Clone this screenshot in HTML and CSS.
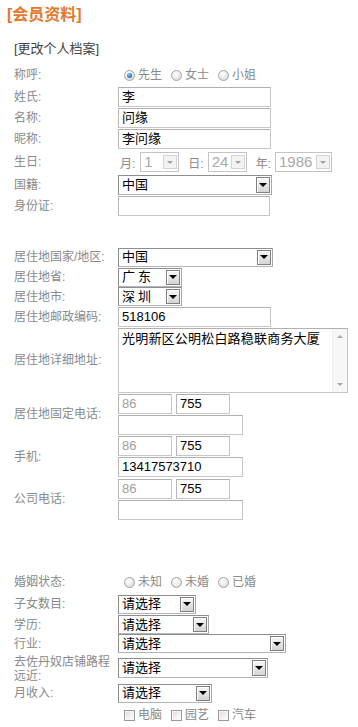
FILE: index.html
```html
<!DOCTYPE html>
<html lang="zh">
<head>
<meta charset="utf-8">
<title>会员资料</title>
<link rel="stylesheet" href="styles.css">
</head>
<body>
<div class="page">
  <h1 class="title">[会员资料]</h1>
  <div class="sub">[更改个人档案]</div>
  <div class="form">
    <div class="row h22"><span class="lbl">称呼:</span>
      <span class="ctl opts">
        <span class="opt"><i class="radio on"></i>先生</span>
        <span class="opt"><i class="radio"></i>女士</span>
        <span class="opt"><i class="radio"></i>小姐</span>
      </span>
    </div>
    <div class="row h21"><span class="lbl">姓氏:</span><span class="ctl"><span class="inp w153">李</span></span></div>
    <div class="row h21"><span class="lbl">名称:</span><span class="ctl"><span class="inp w153">问缘</span></span></div>
    <div class="row h21"><span class="lbl">昵称:</span><span class="ctl"><span class="inp w153">李问缘</span></span></div>
    <div class="row h26"><span class="lbl">生日:</span>
      <span class="ctl bday">
        <span class="dl">月:</span>
        <span class="sel dis w39"><span class="val">1</span><span class="btn"><i class="tri"></i></span></span>
        <span class="dl gap9">日:</span>
        <span class="sel dis w39"><span class="val">24</span><span class="btn"><i class="tri"></i></span></span>
        <span class="dl gap9">年:</span>
        <span class="sel dis w57"><span class="val">1986</span><span class="btn"><i class="tri"></i></span></span>
      </span>
    </div>
    <div class="row h20"><span class="lbl">国籍:</span><span class="ctl"><span class="sel w154 hs20"><span class="val">中国</span><span class="btn"><i class="tri"></i></span></span></span></div>
    <div class="row h21"><span class="lbl">身份证:</span><span class="ctl"><span class="inp w152"></span></span></div>

    <div class="spacer s31"></div>

    <div class="row h20"><span class="lbl">居住地国家/地区:</span><span class="ctl"><span class="sel w155"><span class="val">中国</span><span class="btn"><i class="tri"></i></span></span></span></div>
    <div class="row h20"><span class="lbl">居住地省:</span><span class="ctl"><span class="sel w64"><span class="val sp">广东</span><span class="btn"><i class="tri"></i></span></span></span></div>
    <div class="row h19"><span class="lbl">居住地市:</span><span class="ctl"><span class="sel w64"><span class="val sp">深圳</span><span class="btn"><i class="tri"></i></span></span></span></div>
    <div class="row h21"><span class="lbl">居住地邮政编码:</span><span class="ctl"><span class="inp w153">518106</span></span></div>
    <div class="row h66"><span class="lbl">居住地详细地址:</span>
      <span class="ctl"><span class="ta">
        <span class="ta-text">光明新区公明松白路稳联商务大厦</span>
        <span class="sb"><i class="up"></i><i class="dn"></i></span>
      </span></span>
    </div>
    <div class="row h42"><span class="lbl">居住地固定电话:</span>
      <span class="ctl phone">
        <span class="pline"><span class="inp w54 gray">86</span><span class="inp w54">755</span></span>
        <span class="inp w125"></span>
      </span>
    </div>
    <div class="row h43"><span class="lbl">手机:</span>
      <span class="ctl phone">
        <span class="pline"><span class="inp w54 gray">86</span><span class="inp w54">755</span></span>
        <span class="inp w125">13417573710</span>
      </span>
    </div>
    <div class="row h42"><span class="lbl">公司电话:</span>
      <span class="ctl phone">
        <span class="pline"><span class="inp w54 gray">86</span><span class="inp w54">755</span></span>
        <span class="inp w125"></span>
      </span>
    </div>

    <div class="spacer s51"></div>

    <div class="row h22"><span class="lbl">婚姻状态:</span>
      <span class="ctl opts">
        <span class="opt"><i class="radio"></i>未知</span>
        <span class="opt"><i class="radio"></i>未婚</span>
        <span class="opt"><i class="radio"></i>已婚</span>
      </span>
    </div>
    <div class="row h22"><span class="lbl">子女数目:</span><span class="ctl"><span class="sel w77"><span class="val">请选择</span><span class="btn"><i class="tri"></i></span></span></span></div>
    <div class="row h19"><span class="lbl">学历:</span><span class="ctl"><span class="sel w91"><span class="val">请选择</span><span class="btn"><i class="tri"></i></span></span></span></div>
    <div class="row h19"><span class="lbl">行业:</span><span class="ctl"><span class="sel w168"><span class="val">请选择</span><span class="btn"><i class="tri"></i></span></span></span></div>
    <div class="row h30"><span class="lbl two">去佐丹奴店铺路程远近:</span><span class="ctl"><span class="sel w150 hs20"><span class="val">请选择</span><span class="btn"><i class="tri"></i></span></span></span></div>
    <div class="row h20"><span class="lbl">月收入:</span><span class="ctl"><span class="sel w94"><span class="val">请选择</span><span class="btn"><i class="tri"></i></span></span></span></div>
    <div class="row h24"><span class="lbl"></span>
      <span class="ctl opts">
        <span class="opt"><i class="cbox"></i>电脑</span>
        <span class="opt"><i class="cbox"></i>园艺</span>
        <span class="opt"><i class="cbox"></i>汽车</span>
      </span>
    </div>
  </div>
</div>
</body>
</html>
```
FILE: styles.css
```css
html, body {
  margin: 0;
  padding: 0;
  background: #fff;
}
body {
  font-family: "Liberation Sans", "Noto Sans CJK SC", sans-serif;
  font-size: 12px;
  color: #888;
}
.page {
  width: 358px;
}
.title {
  margin: 0;
  height: 29px;
  line-height: 29px;
  padding-left: 7px;
  font-size: 16px;
  font-weight: bold;
  color: #e4782c;
  font-family: "Liberation Sans", "Noto Sans CJK SC", sans-serif;
}
.sub {
  margin-top: 11px;
  height: 18px;
  line-height: 18px;
  padding-left: 14px;
  font-size: 13px;
  color: #444;
}
.form {
  margin-top: 6px;
  padding-left: 14px;
}
.row {
  display: grid;
  grid-template-columns: 104px 1fr;
  align-items: center;
  overflow: visible;
}
.h19 { height: 19px; }
.h20 { height: 20px; }
.h21 { height: 21px; }
.h22 { height: 22px; }
.h24 { height: 24px; }
.h26 { height: 26px; }
.h30 { height: 30px; }
.h42 { height: 42px; }
.h43 { height: 43px; }
.h66 { height: 66px; }
.spacer.s31 { height: 31px; }
.spacer.s51 { height: 51px; }

.lbl {
  color: #8a8a8a;
  font-size: 12px;
  line-height: 16px;
  white-space: normal;
}
.lbl.two {
  align-self: start;
  padding-top: 2px;
  line-height: 14px;
}
.ctl {
  display: flex;
  align-items: center;
  min-width: 0;
}

/* radios and checkboxes */
.opts {
  padding-left: 6px;
}
.opt {
  display: inline-flex;
  align-items: center;
  margin-right: 9px;
  color: #8a8a8a;
  font-size: 12px;
  line-height: 14px;
}
.radio, .cbox {
  display: inline-block;
  width: 11px;
  height: 11px;
  box-sizing: border-box;
  margin-right: 3px;
  border: 1px solid #a4a4a4;
  background: radial-gradient(circle at 40% 35%, #ffffff 0%, #f0f0f0 40%, #cfcfcf 100%);
  position: relative;
}
.radio {
  border-radius: 50%;
}
.cbox {
  border-color: #9a9a9a;
  background: linear-gradient(135deg, #d8d8d8 0%, #f4f4f4 60%, #ffffff 100%);
  box-shadow: inset 0 0 0 1px #f6f6f6;
}
.radio.on::after {
  content: "";
  position: absolute;
  left: 2px;
  top: 2px;
  width: 5px;
  height: 5px;
  border-radius: 50%;
  background: radial-gradient(circle at 40% 35%, #8fd0f5 0%, #2b7fc0 55%, #10406e 100%);
}

/* text inputs */
.inp {
  display: block;
  box-sizing: border-box;
  height: 20px;
  border: 1px solid #c6c6c6;
  border-top-color: #b0b0b0;
  border-left-color: #b8b8b8;
  background: #fff;
  color: #000;
  font-size: 13px;
  line-height: 18px;
  padding-left: 3px;
  white-space: nowrap;
  overflow: hidden;
}
.inp.gray { color: #a0a0a0; }
.w54 { width: 54px; }
.w125 { width: 125px; }
.w152 { width: 152px; }
.w153 { width: 153px; }

.phone {
  flex-direction: column;
  align-items: flex-start;
  gap: 1px;
}
.pline {
  display: flex;
  gap: 4px;
}

/* selects */
.sel {
  display: flex;
  align-items: center;
  justify-content: space-between;
  box-sizing: border-box;
  height: 19px;
  border: 1px solid #8e8e8e;
  border-right-color: #a8a8a8;
  border-bottom-color: #b4b4b4;
  background: #fff;
  padding: 1px 1px 1px 3px;
  color: #000;
  font-size: 13px;
  line-height: 16px;
}
.sel.hs20 { height: 20px; }
.val { white-space: nowrap; }
.val.sp { letter-spacing: 3px; }
.btn {
  display: flex;
  align-items: center;
  justify-content: center;
  box-sizing: border-box;
  width: 14px;
  height: 100%;
  border: 1px solid #808080;
  background: linear-gradient(#f8f8f8, #d4d4d4);
  box-shadow: inset 1px 1px 0 #ffffff;
}
.tri {
  display: block;
  width: 0;
  height: 0;
  border-left: 4px solid transparent;
  border-right: 4px solid transparent;
  border-top: 4px solid #000;
}
.w39 { width: 39px; }
.w57 { width: 57px; }
.w64 { width: 64px; }
.w77 { width: 78px; }
.w91 { width: 91px; }
.w94 { width: 94px; }
.w150 { width: 150px; }
.w154 { width: 154px; }
.w155 { width: 155px; }
.w168 { width: 168px; }

.sel.dis {
  height: 20px;
  border-color: #c4c4c4;
  color: #a8a8a8;
  font-size: 15px;
}
.sel.dis .btn {
  border-color: #d4d4d4;
  background: #f2f2f2;
  box-shadow: none;
  height: 14px;
}
.sel.dis .tri {
  border-top-color: #a0a0a0;
  border-left-width: 3px;
  border-right-width: 3px;
  border-top-width: 3px;
}

/* birthday */
.bday {
  padding-left: 2px;
}
.dl {
  color: #8a8a8a;
  font-size: 12px;
  margin-right: 5px;
}
.dl.gap9 { margin-left: 9px; margin-right: 4px; }

/* textarea */
.ta {
  display: flex;
  box-sizing: border-box;
  width: 230px;
  height: 65px;
  border: 1px solid #c6c6c6;
  border-top-color: #b0b0b0;
  background: #fff;
}
.ta-text {
  flex: 1;
  padding: 2px 0 0 3px;
  color: #000;
  font-size: 13px;
  line-height: 16px;
  letter-spacing: 0.2px;
  white-space: nowrap;
  overflow: hidden;
}
.sb {
  display: flex;
  flex-direction: column;
  justify-content: space-between;
  align-items: center;
  width: 14px;
  background: #f7f7f7;
  border-left: 1px solid #f0f0f0;
  padding: 6px 0 6px;
}
.up, .dn {
  display: block;
  width: 0;
  height: 0;
  border-left: 3px solid transparent;
  border-right: 3px solid transparent;
}
.up { border-bottom: 3px solid #a8a8a8; }
.dn { border-top: 3px solid #a8a8a8; }
```
